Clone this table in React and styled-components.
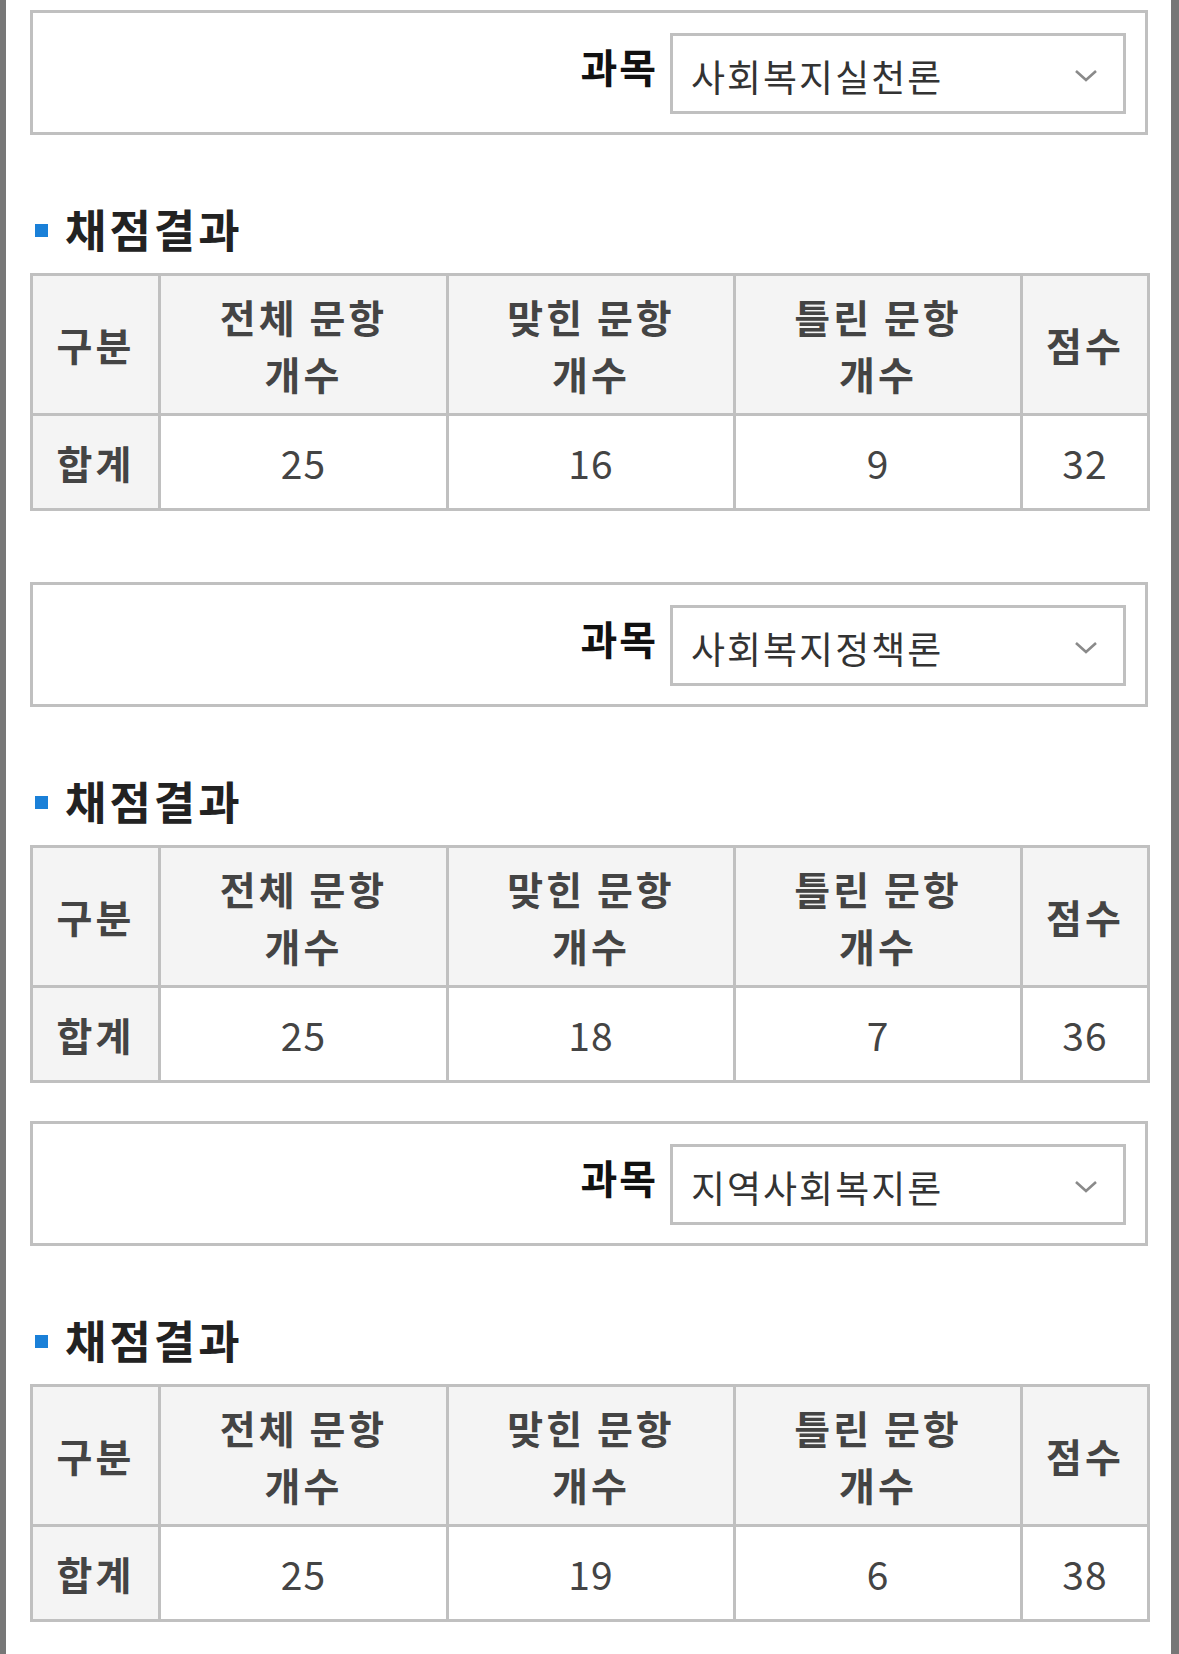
import React from "react";
import styled, { createGlobalStyle } from "styled-components";

const GlobalStyle = createGlobalStyle`
  html, body {
    margin: 0;
    padding: 0;
    background: #fff;
  }
  body {
    font-family: "Noto Sans CJK KR", "Noto Sans", sans-serif;
  }
`;

const results = [
  { subject: "사회복지실천론", total: 25, right: 16, wrong: 9, score: 32, gap: 0 },
  { subject: "사회복지정책론", total: 25, right: 18, wrong: 7, score: 36, gap: 71 },
  { subject: "지역사회복지론", total: 25, right: 19, wrong: 6, score: 38, gap: 38 },
];

function App() {
  return (
    <>
      <GlobalStyle />
      <Page>
        {results.map((r) => (
          <Section key={r.subject} $gap={r.gap}>
            <SubjectBox>
              <Label>과목</Label>
              <Select>
                <span>{r.subject}</span>
                <svg width='26' height='16' viewBox='0 0 26 16'>
                  <path d='M3 3 L13 12 L23 3' fill='none' stroke='#8a8a8a' strokeWidth='2.6' />
                </svg>
              </Select>
            </SubjectBox>
            <Heading>채점결과</Heading>
            <Table>
              <colgroup>
                <col style={{ width: 128 }} />
                <col style={{ width: 288 }} />
                <col style={{ width: 287 }} />
                <col style={{ width: 287 }} />
                <col style={{ width: 127 }} />
              </colgroup>
              <thead>
                <tr>
                  <Th>구분</Th>
                  <Th>전체 문항<br />개수</Th>
                  <Th>맞힌 문항<br />개수</Th>
                  <Th>틀린 문항<br />개수</Th>
                  <Th>점수</Th>
                </tr>
              </thead>
              <tbody>
                <tr>
                  <Th $body>합계</Th>
                  <Td>{r.total}</Td>
                  <Td>{r.right}</Td>
                  <Td>{r.wrong}</Td>
                  <Td>{r.score}</Td>
                </tr>
              </tbody>
            </Table>
          </Section>
        ))}
      </Page>
    </>
  );
}

const Page = styled.div`
  min-height: 1654px;
  box-sizing: border-box;
  border-left: 6px solid #777;
  border-right: 8px solid #777;
  padding: 10px 23px 32px 24px;
`;

const Section = styled.section`
  margin-top: ${(p) => p.$gap}px;
`;

const SubjectBox = styled.div`
  display: flex;
  justify-content: flex-end;
  align-items: center;
  gap: 12px;
  border: 3px solid #c0c0c0;
  padding: 20px 19px 18px;
`;

const Label = styled.span`
  font-size: 40px;
  font-weight: 700;
  letter-spacing: 2px;
  color: #111;
  line-height: 1;
  margin-bottom: 16px;
`;

const Select = styled.div`
  width: 456px;
  height: 81px;
  box-sizing: border-box;
  border: 3px solid #c0c0c0;
  display: flex;
  align-items: center;
  justify-content: space-between;
  padding: 4px 24px 0 18px;
  font-size: 37px;
  letter-spacing: 2px;
  color: #333;
`;

const Heading = styled.h2`
  display: flex;
  align-items: center;
  margin: 69px 0 19px;
  font-size: 45px;
  line-height: 50px;
  letter-spacing: 3px;
  font-weight: 700;
  color: #222;

  &::before {
    content: "";
    width: 13px;
    height: 13px;
    background: #1a80d8;
    margin: 2px 17px 0 5px;
  }
`;

const Table = styled.table`
  width: 100%;
  table-layout: fixed;
  border-collapse: collapse;
  border: 3px solid #c0c0c0;
`;

const Th = styled.th`
  border: 3px solid #c0c0c0;
  background: #f4f4f4;
  height: ${(p) => (p.$body ? 92 : 137)}px;
  padding: 0;
  font-size: 39px;
  line-height: 57px;
  letter-spacing: 3px;
  font-weight: 700;
  color: #444;
  text-align: center;
`;

const Td = styled.td`
  border: 3px solid #c0c0c0;
  height: 92px;
  padding: 0;
  font-size: 39px;
  letter-spacing: 1px;
  color: #444;
  text-align: center;
`;

export default App;
